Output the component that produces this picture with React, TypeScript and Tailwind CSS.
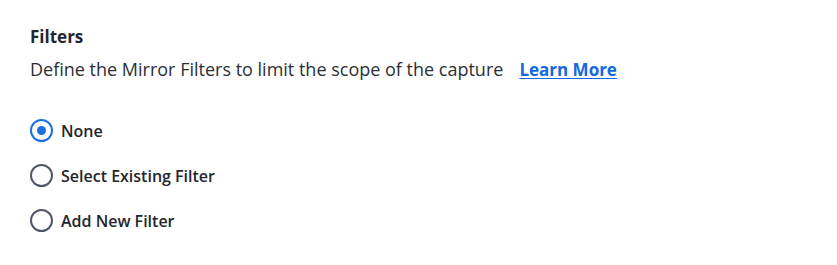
const options = ['None', 'Select Existing Filter', 'Add New Filter'] as const;

export default function App() {
  const selected = 'None';
  return (
    <div className="w-[837px] h-[265px] bg-white px-[30px] pt-[26px] font-['Open_Sans',sans-serif] text-[#23262b]">
      <h2 className="text-[17px] font-bold leading-[22px]">Filters</h2>
      <p className="mt-[10px] text-[18px] leading-[22px] text-[#2b2f36]">
        Define the Mirror Filters to limit the scope of the capture
        <a href="#" className="ml-[16px] text-[17px] font-bold text-[#1468e0] underline underline-offset-2">
          Learn More
        </a>
      </p>
      <ul className="mt-[38px] flex flex-col gap-[22px]">
        {options.map((opt) => (
          <li key={opt} className="flex items-center gap-[8px] h-[23px]">
            {opt === selected ? (
              <span className="w-[23px] h-[23px] rounded-full border-2 border-[#1a6fe3] flex items-center justify-center">
                <span className="w-[9px] h-[9px] rounded-full bg-[#1a6fe3]" />
              </span>
            ) : (
              <span className="w-[23px] h-[23px] rounded-full border-2 border-[#4f5766]" />
            )}
            <span className="text-[16px] font-semibold text-[#23262b]">{opt}</span>
          </li>
        ))}
      </ul>
    </div>
  );
}
